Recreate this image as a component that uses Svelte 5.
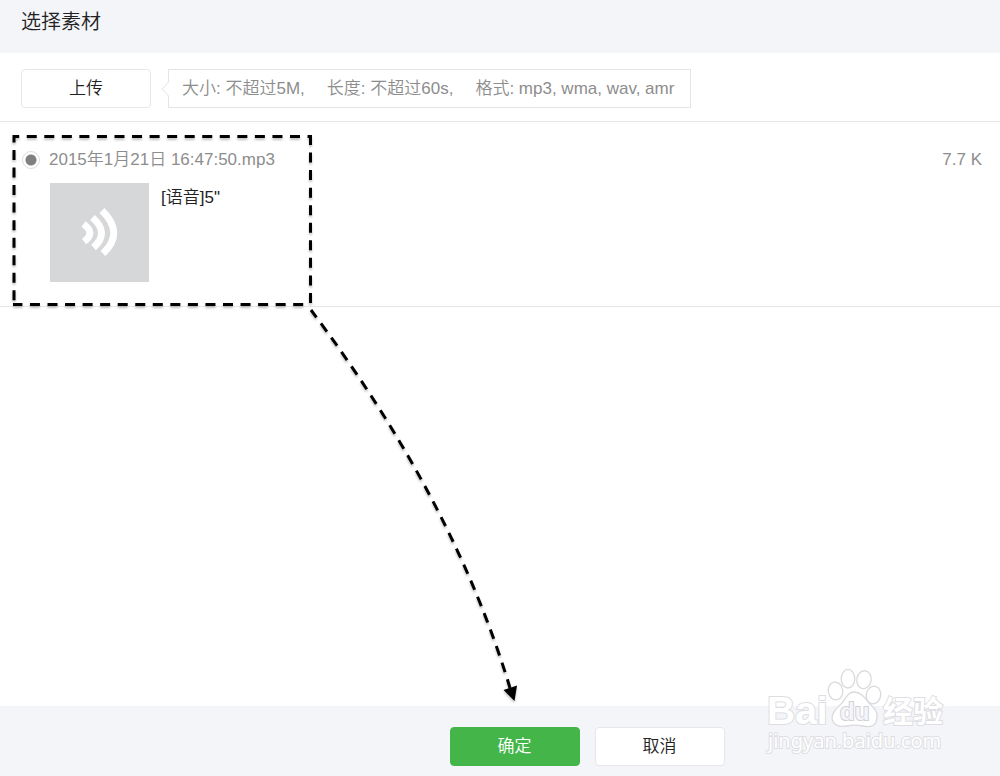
<script lang="ts">
  type Clip = { id: number; name: string; size: string; label: string };

  const limits = ["大小: 不超过5M,", "长度: 不超过60s,", "格式: mp3, wma, wav, amr"];
  const clips: Clip[] = [
    { id: 1, name: "2015年1月21日 16:47:50.mp3", size: "7.7 K", label: '[语音]5"' }
  ];

  let selected = $state(1);
</script>

<main class="dialog">
  <header class="title-bar">
    <h1>选择素材</h1>
  </header>

  <div class="toolbar">
    <button type="button" class="btn">上传</button>
    <div class="hint">
      <svg class="hint-arrow" width="8" height="16" viewBox="0 0 8 16" aria-hidden="true">
        <path d="M8 0.5 L1 8 L8 15.5" fill="#fff" stroke="#e4e4e6" />
      </svg>
      {#each limits as limit}
        <span>{limit}</span>
      {/each}
    </div>
  </div>

  <ul class="clips">
    {#each clips as clip (clip.id)}
      <li class="clip">
        <div class="clip-head">
          <input type="radio" id="clip-{clip.id}" name="clip" value={clip.id} bind:group={selected} />
          <label for="clip-{clip.id}">{clip.name}</label>
          <span class="size">{clip.size}</span>
        </div>
        <div class="clip-body">
          <div class="thumb">
            <svg width="99" height="99" viewBox="0 0 99 99" fill="none" stroke="#fff" aria-hidden="true">
              <path d="M33.5 41 Q46 50 34 58.5" stroke-width="7" />
              <path d="M42.5 34.5 Q60 50 43.5 64.5" stroke-width="7" />
              <path d="M52 27.5 Q75 50 53 70.5" stroke-width="7" />
            </svg>
          </div>
          <span class="label">{clip.label}</span>
        </div>
      </li>
    {/each}
  </ul>

  <footer class="actions">
    <button type="button" class="btn primary">确定</button>
    <button type="button" class="btn">取消</button>
  </footer>

  <!-- Guide: selected clip leads to the confirm button -->
  <svg class="guide" width="560" height="720" viewBox="0 0 560 720" aria-hidden="true">
    <g fill="none" stroke="#000" stroke-width="3" stroke-dasharray="10 7.55">
      <path d="M13 136.5 H311" stroke-dashoffset="3.8" />
      <path d="M310.5 135 V304" />
      <path d="M14 135 V304" stroke-dashoffset="2.6" />
      <path d="M13 304.5 H308" stroke-dashoffset="0.6" />
      <path d="M311 310 Q453 499 510 688" stroke-dashoffset="1" />
    </g>
    <path d="M514.5 701 L503.5 690 L517 685.5 Z" />
  </svg>

  <svg class="watermark" width="190" height="96" viewBox="0 0 190 96" aria-label="Baidu 经验">
    <g fill="#fff" stroke="#dadade" stroke-width="1.3">
      <ellipse cx="73.5" cy="25" rx="7.2" ry="9" transform="rotate(-10 73.5 25)" />
      <ellipse cx="86" cy="12.7" rx="6.8" ry="9.3" />
      <ellipse cx="102" cy="13.7" rx="7.2" ry="9" transform="rotate(10 102 13.7)" />
      <ellipse cx="111.5" cy="29" rx="7.2" ry="8.8" transform="rotate(12 111.5 29)" />
      <path d="M92 26 C99 26 103 32 107 37 C112 42 116 45 115 52 C114 62 106 61 101 60 C96 59 90 59 85 60 C78 61 71 60 70 52 C70 45 76 41 80 37 C84 32 86 26 92 26 Z" />
    </g>
    <g class="mark-text">
      <text class="brand" x="5" y="58">Bai</text>
      <text class="du" x="78" y="54">du</text>
      <text class="cn" x="121" y="56">经验</text>
      <text class="url" x="6" y="82">jingyan.baidu.com</text>
    </g>
  </svg>
</main>

<style>
  :global(body) {
    margin: 0;
    background: #fff;
  }

  .dialog {
    position: relative;
    display: flex;
    flex-direction: column;
    min-height: 100vh;
    color: #222;
    font-family: "Liberation Sans", "Noto Sans CJK SC", sans-serif;
    font-size: 17px;
    font-weight: 350;
    line-height: 24px;
  }

  .title-bar {
    padding: 7px 21px 16px;
    background: #f4f5f9;
  }
  h1 {
    margin: 0;
    font-size: 20px;
    line-height: 30px;
    font-weight: 350;
  }

  .toolbar {
    display: flex;
    gap: 17px;
    padding: 16px 21px 13px;
    border-bottom: 1px solid #e7e7eb;
  }

  .btn {
    box-sizing: border-box;
    width: 130px;
    height: 39px;
    padding: 0;
    border: 1px solid #e7e7eb;
    border-radius: 4px;
    background: #fff;
    color: #222;
    font: inherit;
    cursor: pointer;
  }
  .btn.primary {
    border-color: #44b549;
    background: #44b549;
    color: #fff;
  }

  .hint {
    position: relative;
    display: flex;
    align-items: center;
    gap: 22px;
    padding: 0 16px 0 13px;
    border: 1px solid #e4e4e6;
    color: #8d8d8d;
    white-space: nowrap;
  }
  .hint-arrow {
    position: absolute;
    left: -8px;
    top: 11px;
  }

  .clips {
    flex: 1;
    margin: 0;
    padding: 0;
    list-style: none;
  }
  .clip {
    padding: 26px 18px 24px 22px;
    border-bottom: 1px solid #e7e7eb;
  }
  .clip-head {
    display: flex;
    align-items: center;
    color: #8d8d8d;
  }
  .clip-head input {
    appearance: none;
    width: 18px;
    height: 18px;
    margin: 0 9px 0 0;
    border: 1px solid #dcdde2;
    border-radius: 50%;
    background: #fff;
  }
  .clip-head input:checked {
    background: radial-gradient(circle, #808080 0 5px, #fff 6px);
  }
  .size {
    margin-left: auto;
  }
  .clip-body {
    display: flex;
    gap: 12px;
    padding: 11px 0 0 28px;
  }
  .thumb {
    width: 99px;
    height: 99px;
    background: #d6d7d9;
  }
  .thumb svg {
    display: block;
  }
  .label {
    padding-top: 3px;
  }

  .actions {
    display: flex;
    justify-content: center;
    gap: 15px;
    padding: 21px 0 10px 174px;
    background: #f4f5f9;
  }

  .guide {
    position: absolute;
    left: 0;
    top: 0;
    pointer-events: none;
    filter: drop-shadow(0 2px 1px rgba(0, 0, 0, 0.25));
  }

  .watermark {
    position: absolute;
    right: 48px;
    bottom: 14px;
    pointer-events: none;
    overflow: visible;
  }
  .mark-text {
    fill: #fff;
    stroke: #dedee2;
    stroke-width: 2px;
    paint-order: stroke;
  }
  .brand {
    font-size: 39px;
    font-weight: 700;
  }
  .du {
    fill: #f4f5f9;
    stroke: #d2d2d6;
    font-size: 24px;
    font-weight: 700;
  }
  .cn {
    font-size: 30px;
    font-weight: 700;
  }
  .url {
    font-family: "Noto Sans", sans-serif;
    font-size: 20px;
    font-weight: 400;
  }
</style>
